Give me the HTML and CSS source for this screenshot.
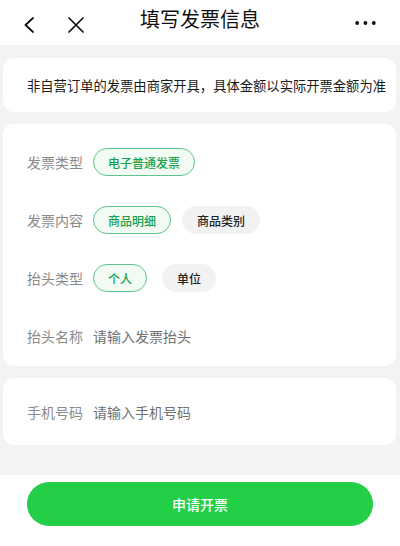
FILE: index.html
```html
<!DOCTYPE html>
<html lang="zh-CN">
<head>
<meta charset="utf-8">
<title>填写发票信息</title>
<link rel="stylesheet" href="styles.css">
</head>
<body>
<div class="page">
  <header class="header">
    <div class="header-left">
      <svg class="icon-back" width="12" height="16" viewBox="0 0 12 16"><path d="M10 1 L2.5 8 L10 15" fill="none" stroke="#111" stroke-width="1.8" stroke-linecap="round" stroke-linejoin="round"/></svg>
      <svg class="icon-close" width="18" height="18" viewBox="0 0 18 18"><path d="M2 2 L16 16 M16 2 L2 16" fill="none" stroke="#111" stroke-width="1.7" stroke-linecap="round"/></svg>
    </div>
    <div class="title">填写发票信息</div>
    <div class="header-right">
      <svg width="22" height="6" viewBox="0 0 22 6"><circle cx="2.2" cy="3" r="1.9" fill="#111"/><circle cx="10.4" cy="3" r="1.9" fill="#111"/><circle cx="18.8" cy="3" r="1.9" fill="#111"/></svg>
    </div>
  </header>

  <main class="main">
    <section class="card notice">非自营订单的发票由商家开具，具体金额以实际开票金额为准</section>

    <section class="card form">
      <div class="row">
        <span class="label">发票类型</span>
        <div class="chips">
          <span class="chip active">电子普通发票</span>
        </div>
      </div>
      <div class="row">
        <span class="label">发票内容</span>
        <div class="chips">
          <span class="chip active">商品明细</span>
          <span class="chip">商品类别</span>
        </div>
      </div>
      <div class="row">
        <span class="label">抬头类型</span>
        <div class="chips">
          <span class="chip active">个人</span>
          <span class="chip wide-gap">单位</span>
        </div>
      </div>
      <div class="row">
        <span class="label">抬头名称</span>
        <span class="placeholder">请输入发票抬头</span>
      </div>
    </section>

    <section class="card phone">
      <div class="row">
        <span class="label">手机号码</span>
        <span class="placeholder">请输入手机号码</span>
      </div>
    </section>
  </main>

  <footer class="footer">
    <button class="submit">申请开票</button>
  </footer>
</div>
</body>
</html>
```

FILE: styles.css
```css
* { box-sizing: border-box; }
html, body { margin: 0; padding: 0; background: #fff; }
body {
  font-family: "Noto Sans CJK SC", "Noto Sans", sans-serif;
  color: #1a1a1a;
  width: 400px;
  height: 546px;
  overflow: hidden;
}
.page { display: flex; flex-direction: column; height: 546px; }

.header {
  height: 45px;
  display: flex;
  align-items: center;
  position: relative;
  background: #fff;
  flex: none;
}
.header-left {
  display: flex;
  align-items: center;
  padding-left: 23px;
  padding-top: 4px;
  gap: 32px;
}
.title {
  position: absolute;
  left: 0;
  right: 0;
  top: 6px;
  text-align: center;
  font-size: 20px;
  line-height: 26px;
  color: #111;
  pointer-events: none;
}
.header-right {
  margin-left: auto;
  padding-right: 23px;
  padding-top: 1px;
  display: flex;
}

.main {
  background: #f3f3f3;
  padding: 13px 4px 30px 3px;
  display: flex;
  flex-direction: column;
  gap: 12px;
  flex: none;
}
.card {
  background: #fff;
  border-radius: 11px;
}
.notice {
  height: 54px;
  display: flex;
  align-items: center;
  padding-left: 24px;
  font-size: 13.3px;
  color: #1a1a1a;
  white-space: nowrap;
  letter-spacing: 0;
}
.form { padding: 9px 0 1px 24px; }
.phone { padding: 5px 0 4px 24px; }
.phone .row { height: 58px; }

.row {
  height: 58px;
  display: flex;
  align-items: center;
}
.label {
  width: 66px;
  flex: none;
  font-size: 14px;
  color: #8a8a8a;
}
.placeholder {
  font-size: 14px;
  color: #707070;
}
.chips { display: flex; gap: 11px; }
.chip {
  height: 28px;
  padding: 0 14px;
  border-radius: 14px;
  background: #f2f2f2;
  border: 1px solid #f2f2f2;
  font-size: 12px;
  font-weight: 500;
  color: #222;
  display: inline-flex;
  align-items: center;
}
.chip.active {
  background: #f1fbf4;
  border-color: #5ec48b;
  color: #17a04c;
}
.chip.wide-gap { margin-left: 4px; }

.footer {
  flex: 1;
  background: #fff;
  padding: 7px 27px 0 27px;
}
.submit {
  width: 346px;
  height: 44px;
  border: none;
  border-radius: 22px;
  background: #22cf47;
  color: #fff;
  font-family: "Noto Sans CJK SC", "Noto Sans", sans-serif;
  font-size: 14px;
  font-weight: 500;
  display: block;
}
```
